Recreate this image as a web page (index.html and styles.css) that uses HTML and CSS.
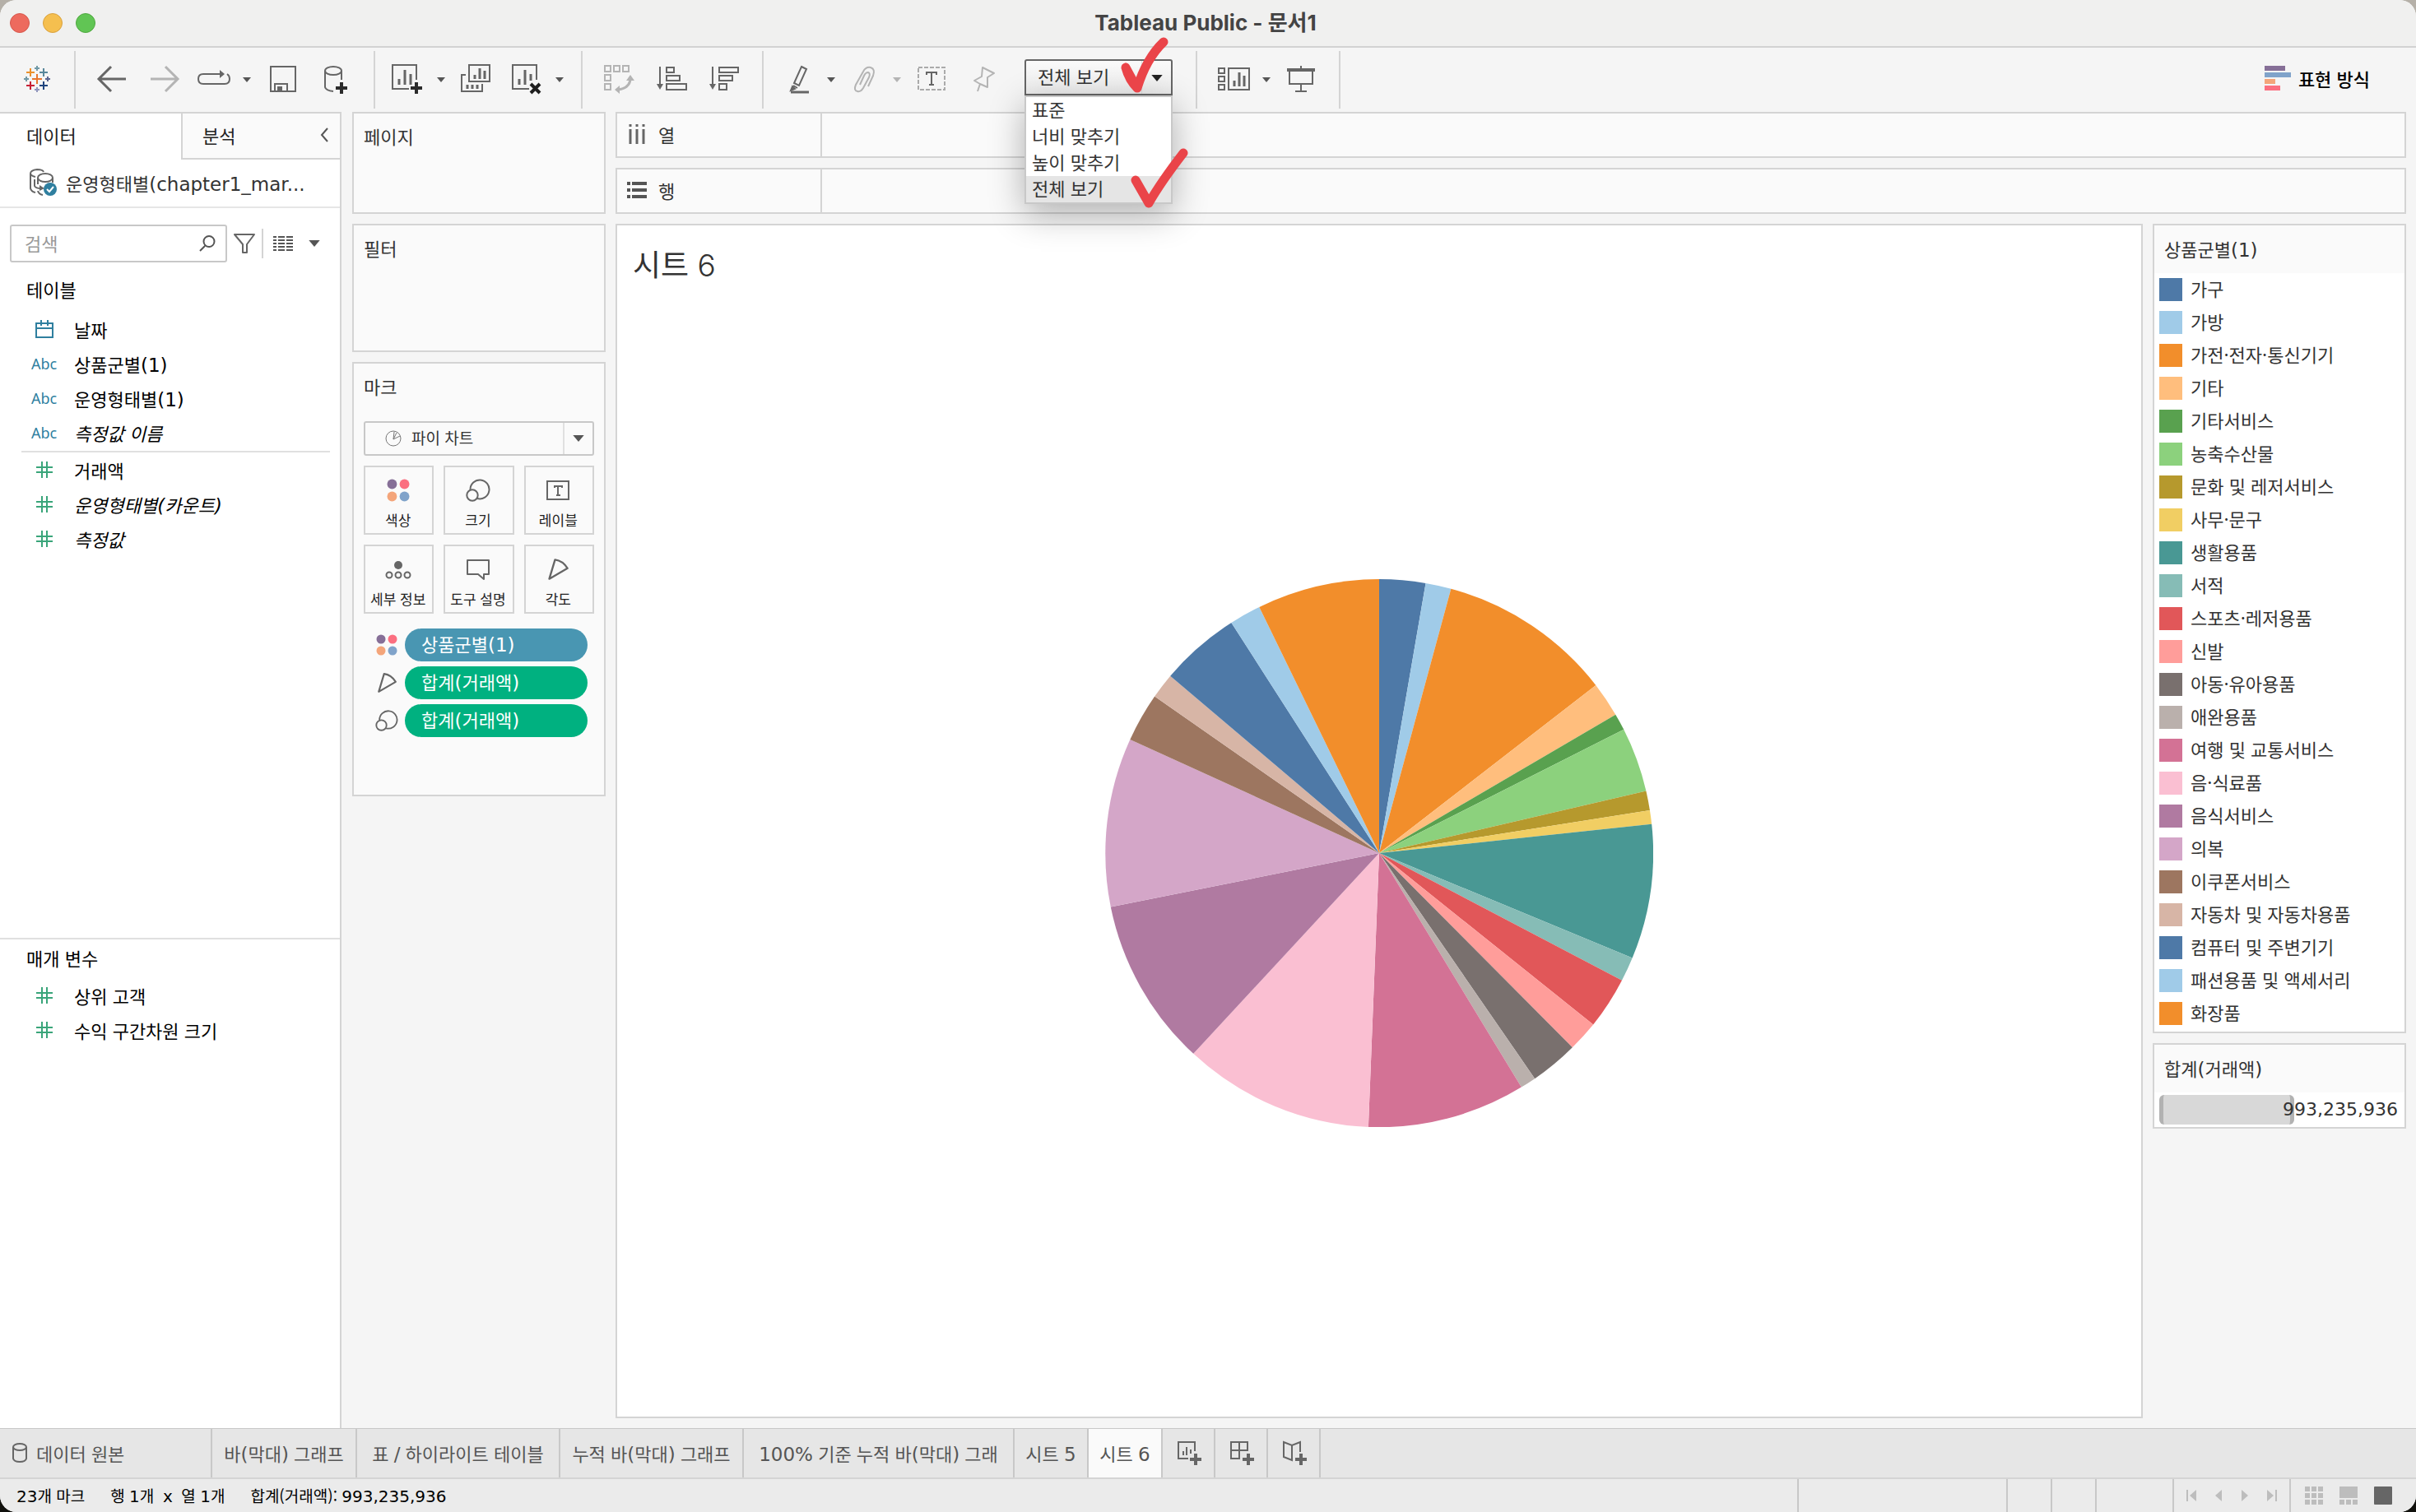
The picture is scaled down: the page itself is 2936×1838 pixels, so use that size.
FILE: index.html
```html
<!DOCTYPE html>
<html lang="ko">
<head>
<meta charset="utf-8">
<title>Tableau Public - 문서1</title>
<link rel="stylesheet" href="styles.css">
</head>
<body>
<svg class="defs" aria-hidden="true">
  <symbol id="caret" viewBox="0 0 10 6"><path d="M0 0h10L5 6z" fill="currentColor"/></symbol>
  <symbol id="dots" viewBox="0 0 26 26"><circle cx="6" cy="6" r="5.5" fill="#866f97"/><circle cx="20" cy="6" r="5.5" fill="#fb6f80"/><circle cx="6" cy="20" r="5.5" fill="#f4a57a"/><circle cx="20" cy="20" r="5.5" fill="#80a3ca"/></symbol>
  <symbol id="size" viewBox="0 0 30 28"><path d="M5.500 13A11.500 11.500 0 1 1 14 24" fill="none" stroke="#666" stroke-width="2"/><circle cx="8" cy="20" r="6.700" fill="none" stroke="#666" stroke-width="2"/></symbol>
  <symbol id="angle" viewBox="0 0 24 24"><path d="M9 2 3 22l19-11Q17 3 9 2z" fill="none" stroke="#666" stroke-width="2" stroke-linejoin="round"/></symbol>
  <symbol id="hash" viewBox="0 0 22 22"><path d="M8 1v20M14 1v20M1 8h20M1 14h20" fill="none" stroke="#3aa57a" stroke-width="2"/></symbol>
</svg>
<div class="window">
  <header class="titlebar">
    <div class="lights"><span class="light red"></span><span class="light yellow"></span><span class="light green"></span></div>
    <h1>Tableau Public - 문서1</h1>
  </header>

  <nav class="toolbar" aria-label="도구 모음">
    <div class="group start">
      <button aria-label="시작 페이지"><svg class="tool" viewBox="0 0 40 40" fill="none" stroke-width="2"><g stroke="#7199a6"><path d="M20 3v6M17 6h6M7 16v6M4 19h6"/></g><path d="M12 6v10M7 11h10" stroke="#eb912c"/><path d="M28 6v10M23 11h10" stroke="#59879b"/><path d="M20 13v12M14 19h12" stroke="#e8762d"/><path d="M33 16v6M30 19h6" stroke="#5b6591"/><path d="M12 22v10M7 27h10" stroke="#c72035"/><path d="M28 22v10M23 27h10" stroke="#1f447e"/><path d="M20 29v6M17 32h6" stroke="#9096bd"/></svg></button>
    </div>
    <div class="group history">
      <button class="w64" aria-label="실행 취소"><svg class="tool" viewBox="0 0 40 40" fill="none" stroke="#666" stroke-width="3"><path d="M37 19H5M19 4 4 19l15 15" /></svg></button>
      <button class="w64" aria-label="다시 실행" disabled><svg class="tool" viewBox="0 0 40 40" fill="none" stroke="#b4b4b4" stroke-width="3"><path d="M3 19h32M21 4l15 15-15 15"/></svg></button>
      <button class="w56" aria-label="재생"><svg class="tool" viewBox="0 0 40 40" fill="none" stroke="#666" stroke-width="2"><path d="M28 13H7Q1 13 1 19t6 6h26q6 0 6-6 0-4-3-6"/><path d="M27 8v10l6-5z" fill="#666" stroke="none"/></svg></button>
      <button class="w24" aria-label="재생 옵션"><svg class="caret"><use href="#caret"/></svg></button>
      <button class="w64" aria-label="저장"><svg class="tool" viewBox="0 0 40 40" fill="none" stroke="#666" stroke-width="2"><path d="M5 4h30v30H5zM10 34v-9h15v9"/><path d="M13 28h6v6h-6z" fill="#666" stroke="none"/></svg></button>
      <button class="w64" aria-label="새 데이터 원본"><svg class="tool" viewBox="0 0 40 40" fill="none" stroke="#666" stroke-width="2"><ellipse cx="17" cy="9" rx="10" ry="5"/><path d="M7 9v20q1 4 10 5M27 9v11"/><path d="M27 23v14M20 30h14" stroke="#2b2b2b" stroke-width="4"/></svg></button>
    </div>
    <div class="group sheets">
      <button class="w64" aria-label="새 워크시트"><svg class="tool" viewBox="0 0 40 40" fill="none" stroke="#666" stroke-width="2"><path d="M32 20V2H3v29h20"/><path d="M11 19v7M18 8v18M25 13v13" stroke-width="3"/><path d="M32 23v14M25 30h14" stroke="#2b2b2b" stroke-width="4"/></svg></button>
      <button class="w20" aria-label="새 워크시트 옵션"><svg class="caret"><use href="#caret"/></svg></button>
      <button class="w64" aria-label="복제"><svg class="tool" viewBox="0 0 40 40" fill="none" stroke="#666" stroke-width="2"><path d="M12 2h25v20H12zM8 14H3v20h25v-9"/><path d="M19 14v5M25 6v13M31 9v10M10 26v5M16 26v5M22 26v5" stroke-width="3"/></svg></button>
      <button class="w60" aria-label="시트 지우기"><svg class="tool" viewBox="0 0 40 40" fill="none" stroke="#666" stroke-width="2"><path d="M32 20V2H3v29h20"/><path d="M11 19v7M18 8v18M25 13v8" stroke-width="3"/><path d="m25 25 11 11m0-11L25 36" stroke="#1e1e1e" stroke-width="4"/></svg></button>
      <button class="w20" aria-label="지우기 옵션"><svg class="caret"><use href="#caret"/></svg></button>
    </div>
    <div class="group sorts">
      <button class="w64" aria-label="행과 열 바꾸기" disabled><svg class="tool" viewBox="0 0 40 40" fill="none" stroke="#b4b4b4" stroke-width="2"><path d="M3 3h7v7H3zM14 3h7v7h-7zM25 3h7v7h-7zM3 14h7v7H3zM3 25h7v7H3z"/><path d="M34 18q0 12-15 14" stroke-width="3"/><path d="m34 14 5 7H29zM15 32l6-5v10z" fill="#b4b4b4" stroke="none"/></svg></button>
      <button class="w64" aria-label="오름차순 정렬"><svg class="tool" viewBox="0 0 40 40" fill="none" stroke="#666" stroke-width="2"><path d="M6 4v22M14 5h9v6h-9zM14 15h16v6H14zM14 25h24v7H14z"/><path d="M2 25h8l-4 7z" fill="#666" stroke="none"/></svg></button>
      <button class="w64" aria-label="내림차순 정렬"><svg class="tool" viewBox="0 0 40 40" fill="none" stroke="#666" stroke-width="2"><path d="M6 4v22M14 5h23v6H14zM14 15h16v6H14zM14 25h9v7h-9z"/><path d="M2 25h8l-4 7z" fill="#666" stroke="none"/></svg></button>
    </div>
    <div class="group marksbar">
      <button class="w56" aria-label="하이라이트"><svg class="tool" viewBox="0 0 40 40" fill="none" stroke="#666" stroke-width="2"><path d="m22 4 6 3-9 20-6-3zM12 27l5 3"/><path d="m11 28-2 5 5-2z" fill="#666"/><path d="M9 35h22" stroke-width="3"/></svg></button>
      <button class="w20" aria-label="하이라이트 옵션"><svg class="caret"><use href="#caret"/></svg></button>
      <button class="w60" aria-label="그룹 멤버" disabled><svg class="tool" viewBox="0 0 40 40" fill="none" stroke="#b4b4b4" stroke-width="2"><path d="m25 28 6-13q3-8-3-10-6-1-9 5l-9 16q-3 7 2 8 4 1 7-4l7-13q2-5-1-6-3 0-5 4l-5 11"/></svg></button>
      <button class="w20" aria-label="그룹 옵션" disabled><svg class="caret off"><use href="#caret"/></svg></button>
      <button class="w64" aria-label="마크 레이블 표시"><svg class="tool" viewBox="0 0 40 40" fill="none" stroke="#aaa" stroke-width="2"><path d="M4 5h32v27H4z" stroke-dasharray="5 2"/><path d="M14 14v-3h12v3M20 11v15M17 26h6" stroke="#666"/></svg></button>
      <button class="w64" aria-label="축 고정" disabled><svg class="tool" viewBox="0 0 40 40" fill="none" stroke="#b4b4b4" stroke-width="2" stroke-linejoin="round"><path d="m18 5 14 7-8 5v12l-9-4-7-4 9-5zM15 25l-3 9"/></svg></button>
      <div class="fit">
        <select class="fit-select" aria-label="맞춤"><option>전체 보기</option></select>
        <svg class="caret fit-caret"><use href="#caret"/></svg>
        <ul class="fit-menu" role="listbox" aria-label="맞춤 옵션">
          <li role="option">표준</li>
          <li role="option">너비 맞추기</li>
          <li role="option">높이 맞추기</li>
          <li role="option" aria-selected="true" class="current">전체 보기</li>
        </ul>
        <svg class="ticks" viewBox="0 0 100 220" fill="none" stroke="#ea4449" stroke-width="11" stroke-linecap="round" stroke-linejoin="round"><path d="M23 43q4 15 14 25Q48 32 69 12M23 43l13 24"/><path d="M35 180l16 28Q66 182 93 147"/></svg>
      </div>
    </div>
    <div class="group views">
      <button class="w60" aria-label="카드 표시"><svg class="tool" viewBox="0 0 40 40" fill="none" stroke="#666" stroke-width="2"><path d="M2 6h7v6H2zM2 16h7v6H2zM2 26h7v6H2zM14 6h25v26H14z"/><path d="M21 21v7M27 11v17M33 15v13" stroke-width="3"/></svg></button>
      <button class="w20" aria-label="카드 옵션"><svg class="caret"><use href="#caret"/></svg></button>
      <button class="w64" aria-label="프레젠테이션 모드"><svg class="tool" viewBox="0 0 40 40" fill="none" stroke="#666" stroke-width="2"><path d="M20 3v4M6 10v15h28V10M20 25v9M13 34h14"/><path d="M3 8h34" stroke-width="4"/></svg></button>
    </div>
    <button class="showme"><svg viewBox="0 0 32 30"><path d="M0 0h25v6H0z" fill="#866f97"/><path d="M0 8h32v6H0z" fill="#80a3ca"/><path d="M0 16h13v6H0z" fill="#f4a57a"/><path d="M0 24h19v6H0z" fill="#fb6f80"/></svg>표현 방식</button>
  </nav>

  <main class="main">
    <aside class="data">
      <div class="data-tabs">
        <button class="data-tab active">데이터</button>
        <button class="data-tab">분석<svg viewBox="0 0 10 18"><path d="M9 1 2 9l7 8" fill="none" stroke="#555" stroke-width="2"/></svg></button>
      </div>
      <div class="source">
        <svg viewBox="0 0 34 34" fill="none" stroke="#666" stroke-width="2"><path d="M1 6v18q1 4 6 5M1 6q0-4 8-5 7 0 8 3M1 6q1 3 6 4"/><ellipse cx="19" cy="11" rx="9" ry="5"/><path d="M10 11v8M6 13v8q1 3 8 3M28 11v6M10 27q1 4 6 5"/><path d="m12 20 6 4-6 3z" fill="#666" stroke="none"/><circle cx="25" cy="25" r="8" fill="#2f7f9f" stroke="none"/><path d="m21 25 3 3 5-6" stroke="#fff"/></svg>
        <span>운영형태별<span class="lat">(chapter1_mar...</span></span>
      </div>
      <div class="search-row">
        <div class="search"><input type="text" placeholder="검색" aria-label="검색"><svg viewBox="0 0 20 20"><path d="M7 13 1 19M12 1a6 6 0 1 1 0 13 6 6 0 1 1 0-13z" fill="none" stroke="#555" stroke-width="2"/></svg></div>
        <button aria-label="필터"><svg class="funnel" viewBox="0 0 26 26"><path d="M1 2h24l-9 12v10h-5V14z" fill="none" stroke="#666" stroke-width="2" stroke-linejoin="round"/></svg></button>
        <button class="viewas" aria-label="보기 옵션"><svg class="grid" viewBox="0 0 24 20"><path d="M0 2h24M0 6h24M0 10h24M0 14h24M0 18h24" stroke="#555" stroke-width="2" stroke-dasharray="4 2 8 2 8 0"/></svg><svg class="caret big"><use href="#caret"/></svg></button>
      </div>
      <section class="tables">
        <h2>테이블</h2>
        <ul class="fields dims">
          <li><svg viewBox="0 0 22 22"><path d="M1 4h20v17H1zM1 10h20M7 0v7M15 0v7" fill="none" stroke="#2f7f9f" stroke-width="2"/></svg>날짜</li>
          <li><span class="abc">Abc</span><span>상품군별<span class="lat">(1)</span></span></li>
          <li><span class="abc">Abc</span><span>운영형태별<span class="lat">(1)</span></span></li>
          <li><span class="abc">Abc</span><em>측정값 이름</em></li>
        </ul>
        <ul class="fields">
          <li><svg><use href="#hash"/></svg>거래액</li>
          <li><svg><use href="#hash"/></svg><em>운영형태별<span class="lat">(</span>카운트<span class="lat">)</span></em></li>
          <li><svg><use href="#hash"/></svg><em>측정값</em></li>
        </ul>
      </section>
      <section class="params">
        <h2>매개 변수</h2>
        <ul class="fields">
          <li><svg><use href="#hash"/></svg>상위 고객</li>
          <li><svg><use href="#hash"/></svg>수익 구간차원 크기</li>
        </ul>
      </section>
    </aside>

    <aside class="cards">
      <section class="card pages"><h2>페이지</h2></section>
      <section class="card filters"><h2>필터</h2></section>
      <section class="card marks">
        <h2>마크</h2>
        <div class="mark-type">
          <svg class="pie-icon" viewBox="0 0 20 20"><path d="M10 1a9 9 0 1 1 0 18 9 9 0 1 1 0-18zM11 2l-1 9 8-4M10 11l4-8" fill="none" stroke="#777" stroke-width="1"/></svg>
          <select aria-label="마크 유형"><option>파이 차트</option></select>
          <span class="mark-caret"><svg class="caret big"><use href="#caret"/></svg></span>
        </div>
        <div class="mark-buttons">
          <button><svg viewBox="0 0 26 26"><use href="#dots"/></svg>색상</button>
          <button><svg viewBox="0 0 30 28"><use href="#size"/></svg>크기</button>
          <button><svg viewBox="0 0 30 28" fill="none" stroke="#666" stroke-width="2"><path d="M2 3h26v22H2zM11 11V9h9v2M15 9v11M13 20h5"/></svg>레이블</button>
          <button><svg viewBox="0 0 32 28" fill="none" stroke="#666" stroke-width="2"><circle cx="16" cy="9" r="5" fill="#666" stroke="none"/><circle cx="5" cy="21" r="3.500"/><circle cx="16" cy="21" r="3.500"/><circle cx="27" cy="21" r="3.500"/></svg>세부 정보</button>
          <button><svg viewBox="0 0 30 28" fill="none" stroke="#666" stroke-width="2"><path d="M2 3h26v17h-6v6l-7-6H2z" stroke-linejoin="round"/></svg>도구 설명</button>
          <button><svg viewBox="0 0 24 24"><use href="#angle"/></svg>각도</button>
        </div>
        <ul class="pills">
          <li><svg><use href="#dots"/></svg><span class="pill blue">상품군별<span class="lat">(1)</span></span></li>
          <li><svg><use href="#angle"/></svg><span class="pill">합계<span class="lat">(</span>거래액<span class="lat">)</span></span></li>
          <li><svg><use href="#size"/></svg><span class="pill">합계<span class="lat">(</span>거래액<span class="lat">)</span></span></li>
        </ul>
      </section>
    </aside>

    <div class="work">
      <div class="shelf"><div class="shelf-name"><svg viewBox="0 0 24 24"><path d="M4 0v3M12 0v3M20 0v3M4 6v18M12 6v18M20 6v18" stroke="#666" stroke-width="3"/></svg>열</div></div>
      <div class="shelf"><div class="shelf-name"><svg viewBox="0 0 24 24"><path d="M0 4h4M0 12h4M0 20h4M6 4h18M6 12h18M6 20h18" stroke="#555" stroke-width="4"/></svg>행</div></div>
      <div class="view">
        <section class="canvas">
          <h2>시트 <span class="num">6</span></h2>
          <div class="plot">
            <svg class="pie" viewBox="50 52 1472 1472" role="img" aria-label="파이 차트">
              <path fill="#4e79a7" d="M786 788L786 52A736 736 0 0 1 911 63z"/>
              <path fill="#a0cbe8" d="M786 788L911 63A736 736 0 0 1 979 78z"/>
              <path fill="#f28e2b" d="M786 788L979 78A736 736 0 0 1 1368 337z"/>
              <path fill="#ffbe7d" d="M786 788L1368 337A736 736 0 0 1 1421 416z"/>
              <path fill="#59a14f" d="M786 788L1421 416A736 736 0 0 1 1443 456z"/>
              <path fill="#8cd17d" d="M786 788L1443 456A736 736 0 0 1 1503 621z"/>
              <path fill="#b6992d" d="M786 788L1503 621A736 736 0 0 1 1513 673z"/>
              <path fill="#f1ce63" d="M786 788L1513 673A736 736 0 0 1 1518 710z"/>
              <path fill="#499894" d="M786 788L1518 710A736 736 0 0 1 1466 1070z"/>
              <path fill="#86bcb6" d="M786 788L1466 1070A736 736 0 0 1 1438 1130z"/>
              <path fill="#e15759" d="M786 788L1438 1130A736 736 0 0 1 1361 1249z"/>
              <path fill="#ff9d9a" d="M786 788L1361 1249A736 736 0 0 1 1305 1310z"/>
              <path fill="#79706e" d="M786 788L1305 1310A736 736 0 0 1 1204 1394z"/>
              <path fill="#bab0ac" d="M786 788L1204 1394A736 736 0 0 1 1168 1417z"/>
              <path fill="#d37295" d="M786 788L1168 1417A736 736 0 0 1 757 1524z"/>
              <path fill="#fabfd2" d="M786 788L757 1524A736 736 0 0 1 287 1327z"/>
              <path fill="#b07aa1" d="M786 788L287 1327A736 736 0 0 1 65 933z"/>
              <path fill="#d4a6c8" d="M786 788L65 933A736 736 0 0 1 117 483z"/>
              <path fill="#9d7660" d="M786 788L117 483A736 736 0 0 1 183 367z"/>
              <path fill="#d7b5a6" d="M786 788L183 367A736 736 0 0 1 225 312z"/>
              <path fill="#4e79a7" d="M786 788L225 312A736 736 0 0 1 389 169z"/>
              <path fill="#a0cbe8" d="M786 788L389 169A736 736 0 0 1 464 127z"/>
              <path fill="#f28e2b" d="M786 788L464 127A736 736 0 0 1 786 52z"/>
            </svg>
          </div>
        </section>
        <div class="legends">
          <section class="legend">
            <h3>상품군별<span class="lat">(1)</span></h3>
            <ul>
              <li><i class="c1"></i>가구</li>
              <li><i class="c2"></i>가방</li>
              <li><i class="c3"></i>가전·전자·통신기기</li>
              <li><i class="c4"></i>기타</li>
              <li><i class="c5"></i>기타서비스</li>
              <li><i class="c6"></i>농축수산물</li>
              <li><i class="c7"></i>문화 및 레저서비스</li>
              <li><i class="c8"></i>사무·문구</li>
              <li><i class="c9"></i>생활용품</li>
              <li><i class="c10"></i>서적</li>
              <li><i class="c11"></i>스포츠·레저용품</li>
              <li><i class="c12"></i>신발</li>
              <li><i class="c13"></i>아동·유아용품</li>
              <li><i class="c14"></i>애완용품</li>
              <li><i class="c15"></i>여행 및 교통서비스</li>
              <li><i class="c16"></i>음·식료품</li>
              <li><i class="c17"></i>음식서비스</li>
              <li><i class="c18"></i>의복</li>
              <li><i class="c19"></i>이쿠폰서비스</li>
              <li><i class="c20"></i>자동차 및 자동차용품</li>
              <li><i class="c1"></i>컴퓨터 및 주변기기</li>
              <li><i class="c2"></i>패션용품 및 액세서리</li>
              <li><i class="c3"></i>화장품</li>
            </ul>
          </section>
          <section class="legend">
            <h3>합계<span class="lat">(</span>거래액<span class="lat">)</span></h3>
            <div class="size-legend"><span class="size-shape"></span><span class="size-value">993,235,936</span></div>
          </section>
        </div>
      </div>
    </div>
  </main>

  <nav class="sheet-tabs" aria-label="시트">
    <button class="source-tab"><svg viewBox="0 0 18 24" fill="none" stroke="#666" stroke-width="2"><ellipse cx="9" cy="5" rx="8" ry="4"/><path d="M1 5v14q1 4 8 4t8-4V5"/></svg>데이터 원본</button>
    <button class="t1">바<span class="lat">(</span>막대<span class="lat">)</span> 그래프</button>
    <button class="t2">표 <span class="lat">/</span> 하이라이트 테이블</button>
    <button class="t3">누적 바<span class="lat">(</span>막대<span class="lat">)</span> 그래프</button>
    <button class="t4"><span class="lat">100%</span> 기준 누적 바<span class="lat">(</span>막대<span class="lat">)</span> 그래</button>
    <button class="t5">시트 <span class="lat">5</span></button>
    <button class="t5 active">시트 <span class="lat">6</span></button>
    <button class="add" aria-label="새 워크시트"><svg viewBox="0 0 30 30" fill="none" stroke="#666" stroke-width="2"><path d="M22 13V2H2v20h12M8 13v5M12 8v10M17 11v5"/><path d="M23 16v14M16 23h14" stroke-width="4"/></svg></button>
    <button class="add" aria-label="새 대시보드"><svg viewBox="0 0 30 30" fill="none" stroke="#666" stroke-width="2"><path d="M22 13V2H2v20h10V2M2 12h20"/><path d="M23 16v14M16 23h14" stroke-width="4"/></svg></button>
    <button class="add" aria-label="새 스토리"><svg viewBox="0 0 30 30" fill="none" stroke="#666" stroke-width="2"><path d="M22 14V2l-10 4L2 2v18l10 4V6"/><path d="M23 16v14M16 23h14" stroke-width="4"/></svg></button>
  </nav>

  <footer class="status">
    <span><span class="lat">23</span>개 마크</span>
    <span>행 <span class="lat">1</span>개&nbsp; <span class="lat">x</span> &nbsp;열 <span class="lat">1</span>개</span>
    <span>합계(거래액): <span class="lat">993,235,936</span></span>
    <div class="status-cells"><i class="s1"></i><i class="s2"></i><i class="s2"></i><i class="s3"></i></div>
    <div class="pager">
      <button aria-label="처음" disabled><svg viewBox="0 0 14 14"><path d="M1 0h2v14H1zM13 0v14L5 7z" fill="#bdbdbd"/></svg></button>
      <button aria-label="이전" disabled><svg viewBox="0 0 14 14"><path d="M11 0v14L3 7z" fill="#bdbdbd"/></svg></button>
      <button aria-label="다음" disabled><svg viewBox="0 0 14 14"><path d="M3 0v14l8-7z" fill="#bdbdbd"/></svg></button>
      <button aria-label="마지막" disabled><svg viewBox="0 0 14 14"><path d="M11 0h2v14h-2zM1 0v14l8-7z" fill="#bdbdbd"/></svg></button>
    </div>
    <div class="modes">
      <button aria-label="시트 정렬 보기"><svg viewBox="0 0 22 22" fill="#bdbdbd"><path d="M0 0h6v6H0zM8 0h6v6H8zM16 0h6v6h-6zM0 8h6v6H0zM8 8h6v6H8zM16 8h6v6h-6zM0 16h6v6H0zM8 16h6v6H8zM16 16h6v6h-6z"/></svg></button>
      <button aria-label="필름 스트립 보기"><svg viewBox="0 0 22 22" fill="#bdbdbd"><path d="M0 0h22v14H0zM0 16h6v6H0zM8 16h6v6H8zM16 16h6v6h-6z"/></svg></button>
      <button aria-label="탭 보기"><svg viewBox="0 0 22 22" fill="#666"><rect width="22" height="22" rx="1"/></svg></button>
    </div>
  </footer>
</div>
</body>
</html>
```

FILE: styles.css
```css
* { box-sizing: border-box; }

html { background: linear-gradient(#b5b0a8 50%, #11110d 50%); }

body {
  margin: 0;
  font-family: "Noto Sans CJK KR", "Noto Sans", sans-serif;
  font-size: 22px;
  line-height: 32px;
  color: #333;
}

h1, h2, h3, ul { margin: 0; padding: 0; font-size: 22px; font-weight: 400; }
ul { list-style: none; }
svg { display: block; flex: none; }
button, select, input { font: inherit; color: inherit; }
button {
  display: flex;
  align-items: center;
  justify-content: center;
  padding: 0;
  border: 0;
  background: none;
}
select { appearance: none; border: 0; background: none; opacity: 1; }

.defs { position: absolute; width: 0; height: 0; }
.lat { font-family: "DejaVu Sans", sans-serif; font-size: 23px; line-height: 1; }
.num { font-family: Inter, sans-serif; }

.window {
  display: flex;
  flex-direction: column;
  min-height: 100vh;
  overflow: hidden;
  border-radius: 20px;
  background: #f5f5f5;
}

/* Title bar */
.titlebar {
  display: grid;
  grid-template-columns: 1fr auto 1fr;
  align-items: center;
  height: 58px;
  padding-right: 6px;
  border-bottom: 2px solid #d2d2d2;
  background: #f0f0ef;
}
.titlebar h1 {
  font-family: Inter, "Noto Sans CJK KR", sans-serif;
  font-size: 26px;
  font-weight: 700;
  color: #444;
}
.lights { display: flex; gap: 16px; padding-left: 12px; }
.light { width: 24px; height: 24px; border-radius: 50%; border: 1px solid; }
.red { background: #ed6a5e; border-color: #d5574c; }
.yellow { background: #f5bf4f; border-color: #d8a03d; }
.green { background: #61c554; border-color: #4fa73f; }

/* Toolbar */
.toolbar { display: flex; align-items: center; height: 78px; }
.group {
  display: flex;
  align-items: center;
  height: 70px;
  border-right: 2px solid #d4d4d4;
}
.tool { width: 40px; height: 40px; }
.caret { width: 10px; height: 6px; color: #555; }
.caret.off { color: #b4b4b4; }
.caret.big { width: 14px; height: 8px; }
.w20 { width: 20px; }
.w24 { width: 24px; }
.w56 { width: 56px; }
.w60 { width: 60px; }
.w64 { width: 64px; }
.start { width: 92px; justify-content: center; }
.history { padding: 0 14px 0 12px; }
.sheets { padding: 0 16px 0 6px; }
.sorts { padding: 0 14px 0 12px; }
.marksbar { padding: 0 28px 0 16px; }
.views { padding: 0 14px; }
.showme { gap: 9px; margin-left: auto; padding: 0 56px 4px 0; color: #000; font-weight: 500; }
.showme svg { width: 32px; height: 30px; }

.fit { position: relative; width: 180px; height: 50px; margin-left: 17px; }
.fit-select {
  display: block;
  width: 100%;
  height: 44px;
  padding: 0 14px 4px;
  border: 2px solid #666;
  border-radius: 3px 3px 0 0;
  background: linear-gradient(#ddd, #ddd) 140px 0 / 1px 100% no-repeat, linear-gradient(#fafafa, #ececec);
}
.fit-caret { position: absolute; right: 12px; top: 19px; width: 14px; height: 8px; color: #222; }
.fit-menu {
  position: absolute;
  z-index: 2;
  top: 44px;
  left: 0;
  width: 100%;
  border: 2px solid #c8c8c8;
  background: #fff;
  box-shadow: 0 12px 40px rgba(0, 0, 0, .3);
}
.fit-menu li { height: 32px; padding-left: 7px; line-height: 28px; }
.fit-menu .current { background: #e5e5e5; }
.ticks { position: absolute; z-index: 3; left: 100px; top: -33px; width: 100px; height: 220px; }

/* Data pane */
.main { display: flex; flex: 1; }
.data {
  display: flex;
  flex-direction: column;
  flex: none;
  width: 415px;
  border-top: 2px solid #d4d4d4;
  border-right: 2px solid #d4d4d4;
  background: #fff;
  color: #000;
}
.data-tabs { display: flex; height: 56px; }
.data-tab { width: 220px; padding: 0 0 4px 32px; justify-content: flex-start; color: #222; }
.data-tab + .data-tab {
  flex: 1;
  justify-content: space-between;
  padding: 0 14px 2px 24px;
  border-left: 2px solid #d4d4d4;
  border-bottom: 2px solid #d4d4d4;
  background: #fafafa;
}
.data-tab svg { width: 10px; height: 18px; }
.source {
  display: flex;
  align-items: center;
  gap: 10px;
  height: 59px;
  padding: 0 0 2px 36px;
  border-bottom: 2px solid #e6e6e6;
  color: #333;
}
.source svg { width: 34px; height: 34px; }
.search-row { display: flex; align-items: center; padding: 20px 0 0 12px; }
.search {
  display: flex;
  align-items: center;
  width: 264px;
  height: 46px;
  padding: 0 12px 0 16px;
  border: 2px solid #c8c8c8;
  border-radius: 3px;
}
.search input { flex: 1; min-width: 0; padding: 0 0 2px; border: 0; outline: 0; background: none; }
.search input::placeholder { color: #999; opacity: 1; }
.search svg { width: 20px; height: 20px; }
.funnel { width: 26px; height: 26px; margin: 0 8px; }
.viewas { gap: 19px; height: 36px; padding-left: 12px; border-left: 2px solid #d4d4d4; }
.grid { width: 24px; height: 20px; }
.tables { flex: 1; padding-top: 16px; }
.params { flex: none; height: 596px; padding-top: 6px; border-top: 2px solid #e0e0e0; }
.data h2 { padding-left: 32px; }
.tables h2 { margin-bottom: 12px; }
.params h2 { margin-bottom: 9px; }
.fields li { display: flex; align-items: center; height: 42px; padding-left: 38px; }
.fields svg { width: 22px; height: 22px; margin: 0 25px 0 5px; }
.abc { width: 52px; font-family: "Noto Sans", sans-serif; font-size: 18px; color: #2f7f9f; }
.dims { margin: 0 12px 0 26px; padding-bottom: 1px; border-bottom: 2px solid #e0e0e0; }
.dims li { padding-left: 12px; }

/* Cards */
.cards { display: flex; flex-direction: column; flex: none; gap: 12px; width: 308px; margin-left: 13px; }
.card { padding: 11px 12px; border: 2px solid #d4d4d4; background: #fafafa; }
.pages { height: 124px; }
.filters { height: 156px; }
.marks { height: 528px; }
.marks h2 { margin-bottom: 27px; }
.mark-type {
  display: flex;
  align-items: center;
  height: 42px;
  border: 2px solid #c8c8c8;
  border-radius: 3px;
}
.pie-icon { width: 20px; height: 20px; margin: 0 12px 0 24px; }
.mark-type select { flex: 1; padding-bottom: 2px; font-size: 19px; }
.mark-caret {
  display: flex;
  align-items: center;
  justify-content: center;
  width: 36px;
  height: 38px;
  border-left: 2px solid #e0e0e0;
}
.mark-buttons { display: grid; grid-template-columns: repeat(3, 1fr); gap: 12px; margin-top: 12px; }
.mark-buttons button {
  flex-direction: column;
  gap: 8px;
  height: 84px;
  padding: 12px 2px 0 0;
  border: 2px solid #d4d4d4;
  font-size: 17px;
  line-height: 28px;
  color: #222;
}
.mark-buttons svg { height: 28px; width: 32px; }
.pills { display: flex; flex-direction: column; gap: 6px; margin: 18px 8px 0 0; }
.pills li { display: flex; align-items: center; }
.pills svg { width: 28px; height: 26px; margin: 0 8px 0 14px; }
.pill { flex: 1; height: 40px; padding: 2px 20px; border-radius: 20px; background: #00b180; color: #fff; }
.blue { background: #4996b2; }

/* Work area */
.work { display: flex; flex: 1; flex-direction: column; gap: 12px; min-width: 0; margin: 0 12px 12px; }
.shelf { display: flex; height: 56px; border: 2px solid #d4d4d4; background: #fafafa; }
.shelf-name { display: flex; align-items: center; gap: 14px; width: 249px; padding: 0 0 2px 12px; border-right: 2px solid #d4d4d4; }
.shelf-name svg { width: 24px; height: 24px; }
.view { display: flex; flex: 1; gap: 12px; }
.canvas { display: flex; flex: 1; flex-direction: column; border: 2px solid #d4d4d4; background: #fff; }
.canvas h2 { height: 78px; padding: 22px 19px 0; font-size: 37px; line-height: 48px; }
.canvas .num { font-weight: 300; }
.plot { display: flex; flex: 1; align-items: center; justify-content: center; }
.pie { width: 666px; height: 666px; }

.legends { display: flex; flex-direction: column; flex: none; gap: 12px; width: 308px; }
.legend { border: 2px solid #d4d4d4; background: #fff; }
.legend h3 { height: 58px; padding: 12px 12px 0; background: #fafafa; }
.legend ul { padding-bottom: 2px; }
.legend li { display: flex; gap: 10px; height: 40px; padding: 6px 0 0 6px; line-height: 24px; }
.legend i { width: 28px; height: 28px; }
.size-legend { display: flex; align-items: center; height: 42px; padding-left: 6px; }
.size-shape {
  width: 164px;
  height: 36px;
  border: solid #b2b2b2;
  border-width: 0 5px;
  border-radius: 6px;
  background: #d8d8d8;
}
.size-value {
  flex: 1;
  display: flex;
  justify-content: flex-end;
  width: 0;
  padding-right: 8px;
  font-family: "DejaVu Sans", sans-serif;
}

.c1 { background: #4e79a7; }
.c2 { background: #a0cbe8; }
.c3 { background: #f28e2b; }
.c4 { background: #ffbe7d; }
.c5 { background: #59a14f; }
.c6 { background: #8cd17d; }
.c7 { background: #b6992d; }
.c8 { background: #f1ce63; }
.c9 { background: #499894; }
.c10 { background: #86bcb6; }
.c11 { background: #e15759; }
.c12 { background: #ff9d9a; }
.c13 { background: #79706e; }
.c14 { background: #bab0ac; }
.c15 { background: #d37295; }
.c16 { background: #fabfd2; }
.c17 { background: #b07aa1; }
.c18 { background: #d4a6c8; }
.c19 { background: #9d7660; }
.c20 { background: #d7b5a6; }

/* Sheet tabs */
.sheet-tabs {
  display: flex;
  height: 62px;
  border-top: 1px solid #c8c8c8;
  border-bottom: 2px solid #d4d4d4;
  background: #e6e6e6;
  color: #555;
}
.sheet-tabs button { display: block; flex: none; padding-bottom: 2px; white-space: pre; border-right: 2px solid #c8c8c8; }
.sheet-tabs .source-tab { display: flex; width: 258px; gap: 11px; padding-left: 15px; justify-content: flex-start; }
.source-tab svg { width: 18px; height: 24px; }
.t1 { width: 176px; }
.t2 { width: 247px; }
.t3 { width: 223px; }
.t4 { width: 329px; }
.t5 { width: 90px; }
.sheet-tabs .add { display: flex; width: 64px; padding-left: 2px; }
.add svg { width: 30px; height: 30px; }
.sheet-tabs .active { background: #fafafa; }

/* Status bar */
.status {
  display: flex;
  align-items: center;
  gap: 31px;
  height: 40px;
  padding-left: 20px;
  background: #ebebeb;
  font-size: 19px;
  color: #000;
}
.status .lat { font-size: 20px; }
.status-cells { display: flex; margin-left: auto; height: 40px; }
.status-cells i { border-left: 2px solid #c8c8c8; }
.s1 { width: 254px; }
.s2 { width: 54px; }
.s3 { width: 94px; }
.pager { display: flex; align-items: center; justify-content: space-around; width: 142px; height: 40px; margin-left: -31px; padding: 0 5px; border-left: 2px solid #c8c8c8; }
.pager svg { width: 14px; height: 14px; }
.modes { display: flex; align-items: center; gap: 20px; width: 154px; height: 40px; margin-left: -31px; padding-left: 17px; border-left: 2px solid #c8c8c8; }
.modes svg { width: 22px; height: 22px; }
```
